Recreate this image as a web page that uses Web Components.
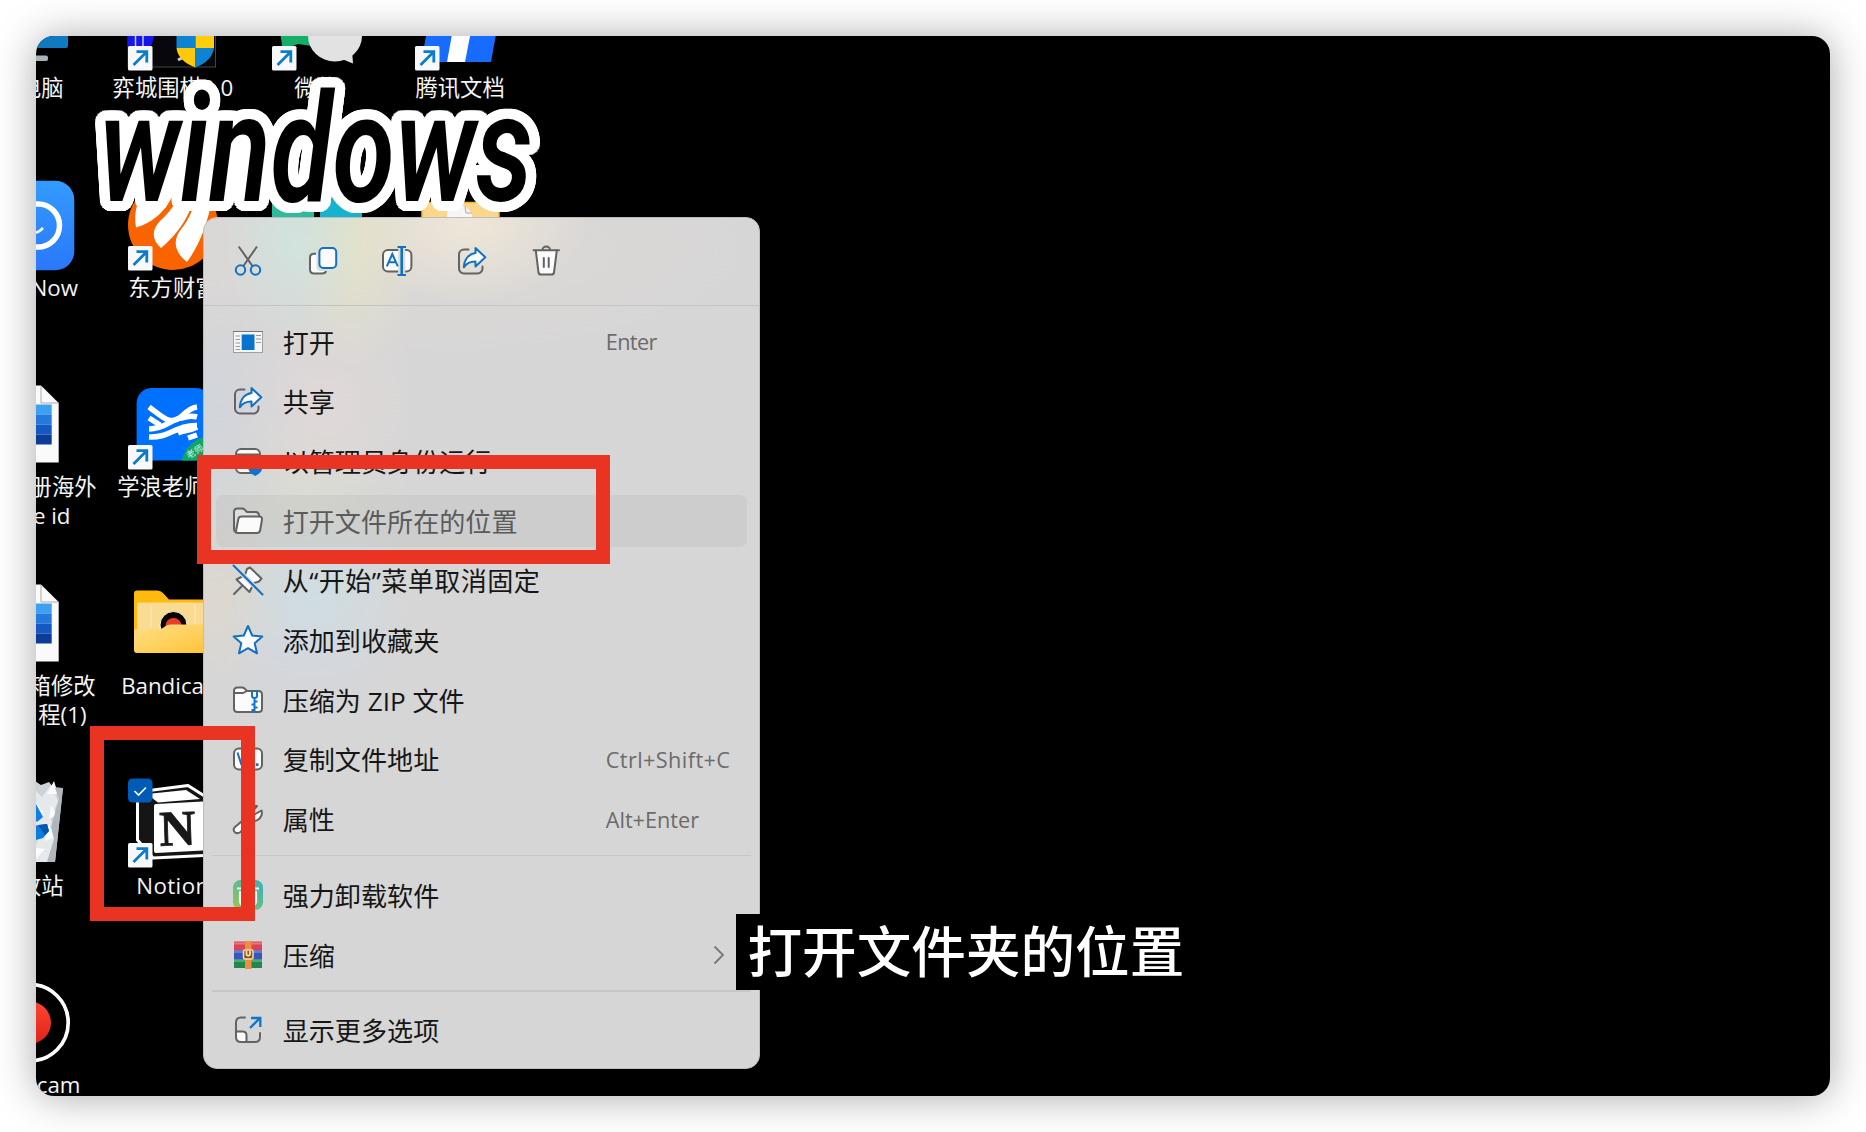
<!DOCTYPE html>
<html lang="zh-CN">
<head>
<meta charset="utf-8">
<title>windows</title>
<style>
html,body{margin:0;height:100%;background:#fff}
body{font-family:"Open Sans","Noto Sans CJK SC",sans-serif;overflow:hidden}
</style>
</head>
<body>
<tutorial-frame></tutorial-frame>
<script>
const B = '#1271c2', G = '#636363', W = '#fbfbfb';
const shareIcon = `<g fill="none" stroke-linejoin="round" stroke-linecap="round"><path d="M12.5 4.5H8A5 5 0 0 0 3 9.500V23.500A5 5 0 0 0 8 28.500H21.500A5 5 0 0 0 26.500 23.500V21.500" stroke="${G}" stroke-width="2"/><path d="M19.500 3L29.300 12.300L19.500 21.500V16.600C14 16.500 10.500 18.500 7.800 22.300C8.300 14.500 12.500 9 19.500 8Z" fill="${W}" stroke="${B}" stroke-width="2"/></g>`;
const ICONS = {
cut:`<g fill="none" stroke-width="2"><path d="M6.700 1.500L20.700 21.300M25 1.500L11.200 21.300" stroke="${G}"/><circle cx="8.500" cy="25" r="4.700" stroke="${B}"/><circle cx="23.500" cy="25" r="4.700" stroke="${B}"/></g>`,
copy:`<path d="M9.500 8.800H7Q3 8.800 3 12.800V24.500Q3 28.500 7 28.500H15Q18.500 28.500 19 26H12.500Q9.500 25 9.500 22Z" fill="${W}"/><path d="M9 8.800H7Q3 8.800 3 12.800V24.500Q3 28.500 7 28.500H15Q18.500 28.500 19 26" fill="none" stroke="${G}" stroke-width="2"/><rect x="12.400" y="3" width="16.800" height="20" rx="4" fill="${W}" stroke="${B}" stroke-width="2"/>`,
rename:`<rect x="2" y="5" width="28.400" height="21.500" rx="5" fill="${W}" stroke="${G}" stroke-width="2"/><path d="M20.700 2V30" stroke="#dcdcd6" stroke-width="7"/><g fill="none" stroke="${B}" stroke-width="2"><path d="M5.800 21.300L11.300 9L16.800 21.300M7.800 17.300H14.800M16.500 2H25M16.500 30H25"/><path d="M20.700 2V30" stroke-width="2.600"/></g>`,
share:shareIcon,
trash:`<g stroke="${G}" stroke-width="2" stroke-linejoin="round" stroke-linecap="round"><path d="M5.800 5.500L8.500 27.500Q8.800 29.500 11 29.500H21.500Q23.700 29.500 24 27.500L26.800 5.500" fill="${W}"/><path d="M3.500 5.300H29M12.500 5A3.700 3.400 0 0 1 20 5M13.800 13V22M18.700 13V22" fill="none"/></g>`,
app:`<rect x="1.500" y="5.500" width="29" height="21" fill="#f5f5f5" stroke="#a0a0a0"/><path d="M1 5.500H31" stroke="#777"/><rect x="9.700" y="8.500" width="12.800" height="15.500" fill="#0873cd"/><path d="M3.500 10H8M3.500 13.500H8M3.500 17H8M3.500 20.500H8M3.500 23.500H8M24 9.500H29M24 13H29M24 16.500H29" stroke="#999"/>`,
admin:`<rect x="4" y="4" width="24" height="24" rx="5" fill="${W}" stroke="${G}" stroke-width="2"/><path d="M4 9.500H28" stroke="${G}" stroke-width="2"/><path d="M16 17Q20 17 23 14.500Q26 17 30.500 17V22Q30 28 23.200 31Q16.500 28 16 22Z" fill="#0a74d2"/>`,
folder:`<g fill="${W}" stroke="${G}" stroke-width="2" stroke-linejoin="round"><path d="M6 28Q2 27.500 2 23.500V7Q2 3.500 5.500 3.500H10Q11.500 3.500 12.500 4.500L15 7H23.500Q27 7 27.300 11.500" fill="#dedede"/><path d="M9.500 11.500H27Q30.500 11.500 29.900 15L28.200 25Q27.700 28 24.700 28H6.500Q3.500 28 4.200 25L6.300 14Q6.800 11.500 9.500 11.500Z"/></g>`,
unpin:`<g stroke-linejoin="round" stroke-linecap="round"><path d="M18 3.500L29.500 14.500L27 17.500L22 19L17.500 28L4.500 15.500L13 11L15 5Z" fill="${W}" stroke="${G}" stroke-width="2"/><path d="M10 22L2 30" stroke="${G}" stroke-width="2"/><path d="M1.500 1.500L30.500 30.500" stroke="#d6d9dc" stroke-width="4.500"/><path d="M1.500 1.500L30.500 30.500" stroke="${B}" stroke-width="2"/></g>`,
star:`<path d="M16 2L20.200 11.500L30.300 12.500L22.700 19.300L25 29.300L16 24.200L7 29.300L9.300 19.300L1.700 12.500L11.800 11.500Z" fill="${W}" stroke="${B}" stroke-width="2" stroke-linejoin="round"/>`,
zip:`<path d="M2 9V24.500Q2 28 5.500 28H26.500Q30 28 30 24.500V11Q30 7 26.500 7H15L12.500 4.500Q11.500 3.500 10 3.500H5.500Q2 3.500 2 7Z" fill="${W}" stroke="${G}" stroke-width="2"/><path d="M2.500 9H11L15 7" fill="none" stroke="${G}" stroke-width="1.800"/><g stroke="#0d76cf" fill="none"><path d="M20 7V12Q20 14 22.500 14Q25 14 25 12V7M22.500 14V28" stroke-width="2"/><path d="M22.500 17.500H25.500M19.500 20.500H22.500M22.500 23.500H25.500M19.500 26H22.500" stroke-width="1.800"/></g>`,
path:`<rect x="2" y="5.500" width="28" height="21" rx="5" fill="${W}" stroke="${G}" stroke-width="2"/><path d="M5.500 9.500L9.500 22" stroke="${B}" stroke-width="2"/><rect x="23.800" y="20.300" width="2.700" height="2.700" fill="${B}"/>`,
wrench:`<path d="M2.500 24.500L14 14.500C13 8 18 2 25 3L20.500 8.500L22.500 11.500L29.500 7.500C31.500 13.500 26 19 18.500 18.500L8.500 29C4 32 0 28 2.500 24.500Z" fill="${W}" stroke="${G}" stroke-width="2" stroke-linejoin="round"/>`,
uninstall:`<defs><linearGradient id="u" x1="1" y1="0" x2="0" y2="1"><stop stop-color="#38b0bd"/><stop offset=".55" stop-color="#67bd87"/><stop offset="1" stop-color="#a2c64e"/></linearGradient></defs><rect x="1" y="1" width="30" height="30" rx="7.500" fill="url(#u)"/><path d="M5 9.500H27M8 12V22Q8 26 12 26H20Q24 26 24 22V12" fill="none" stroke="#f1f8f0" stroke-width="2.200"/>`,
rar:`<rect x="2" y="2.500" width="28" height="9" fill="#d94352"/><rect x="2" y="11.500" width="28" height="9" fill="#3657bd"/><rect x="2" y="20.500" width="28" height="8.500" fill="#22874a"/><path d="M2 4.500H30" stroke="#eb7680" stroke-width="2"/><path d="M2 13H30" stroke="#5c7cdb" stroke-width="2"/><path d="M2 22H30" stroke="#4eaa6d" stroke-width="2"/><rect x="13" y="2" width="6.500" height="28" fill="#ec8e3c"/><rect x="11.500" y="11" width="9.500" height="9" rx="1.500" fill="#8b5624" stroke="#f6dcae" stroke-width="1.500"/><path d="M14.500 12V15.500Q16.200 18 18 15.500V12" fill="none" stroke="#ffe6b8" stroke-width="1.700"/>`,
more:`<g fill="none" stroke-width="2" stroke-linecap="round"><path d="M4 17.500H10.500Q14.500 17.500 14.500 21.500V28H8Q4 28 4 24Z" fill="${W}" stroke="none"/><path d="M13 3.500H9Q4 3.500 4 8.500V23Q4 28 9 28H23Q28 28 28 23V19M4 17.500H10.500Q14.500 17.500 14.500 21.500V28" stroke="${G}"/><path d="M19 4H28.300V13M28 4L18 14" stroke="#0d76cf" stroke-width="2.300" stroke-linecap="butt"/></g>`
};
const arrow = `<rect x="0" y="64" width="24.500" height="24.500" rx="1.500" fill="#f7f8fa"/><path d="M5.500 83L18 70.500M8.500 69.600H18.800V80.500" fill="none" stroke="#0c7bc9" stroke-width="2.800"/>`;
const doc = `<path d="M16 4.500H56L73.700 22V81.500H16Z" fill="#fafafa"/><path d="M56 5V22H73.500" fill="none" stroke="#aaa"/><rect x="16" y="23.500" width="50.700" height="10" fill="#3ea0f0"/><rect x="16" y="33.500" width="50.700" height="10" fill="#2379dc"/><rect x="16" y="43.500" width="50.700" height="10" fill="#1259c3"/><rect x="16" y="53.500" width="50.700" height="10" fill="#0b3c96"/>`;
const ART = {
pc:`<rect x="0" y="10" width="83" height="56" rx="2" fill="#1079c0"/><rect x="25" y="73.500" width="38" height="5.500" rx="2" fill="#a9b2b9"/>`,
go:`<rect x="0" y="8" width="87.500" height="77" fill="#08080c" stroke="#444"/><path d="M0 30H29Q28 54 22 66H0Z" fill="#1616ea"/><path d="M7.500 40V66M15 40V66" stroke="#c6c6ff" stroke-width="1.500"/><path d="M50 78L58 74" stroke="#ccc" stroke-width="3"/><path d="M48.500 40H67.500V66H48.500Z" fill="#0c83d3"/><path d="M67.500 40H86V66H67.500Z" fill="#ffcd0a"/><path d="M48.500 66H67.500V85.500Q50 79 48.500 66Z" fill="#ffc90a"/><path d="M86 66H67.500V85.500Q84 79 86 66Z" fill="#0c83d3"/>${arrow}`,
wechat:`<path d="M8 50H36Q36 58 40 64L26 62L15 66L11 69Z" fill="#13ae67"/><ellipse cx="63" cy="54" rx="27" ry="25.500" fill="#e2e2e2"/><path d="M70 77L81 81.500L80 68Z" fill="#e2e2e2"/>${arrow}`,
docs:`<path d="M13 44H82.500L76 80H6Z" fill="#176bff"/><path d="M38.500 44H57L50 80H32Z" fill="#fff"/>${arrow}`,
now:`<defs><linearGradient id="n" x2="0" y2="1"><stop stop-color="#339bff"/><stop offset="1" stop-color="#2a78fa"/></linearGradient></defs><rect x="0" y="-1.300" width="89.300" height="89.500" rx="19" fill="url(#n)"/><circle cx="53" cy="43.500" r="21.500" fill="none" stroke="#fff" stroke-width="5.500"/><path d="M46 48Q50 54 58 46" fill="none" stroke="#fff" stroke-width="2.500"/>`,
east:`<circle cx="45" cy="43" r="45" fill="#f96400"/><g fill="#fff"><path d="M8 45.500C5 30 10 15 20 5H48C42 24 28 40 8 45.500Z"/><path d="M33 66C24 58 23 48 32 39C42 30 48 22 52 8L66 8C66 30 50 52 33 66Z"/><path d="M59 80C46 70 44 58 54 46C62 36 66 25 69 10L84 15C80 45 68 68 59 80Z"/></g>${arrow}`,
tiles:`<rect x="0" y="0" width="42" height="60" fill="#2dbb9c"/><rect x="48" y="0" width="42" height="60" fill="#15b3cd"/>`,
papers:`<rect x="7" y="20.500" width="77" height="50" rx="3" fill="#fbd68b" stroke="#f1b53c" stroke-width="1.500"/><path d="M32 24H50L57 31V60H32Z" fill="#f6f6f6"/><path d="M50 24L51 31H57" fill="none" stroke="#aaa"/>`,
doc,
wave:`<clipPath id="w"><rect x="8.600" y="7" width="74" height="72.500" rx="15"/></clipPath><rect x="8.600" y="7" width="74" height="72.500" rx="15" fill="#0070ff"/><g fill="none" stroke="#fff" stroke-width="5.500"><path d="M21 26C36 37 42 45 54 35Q62 27 69 26"/><path d="M21 37L32 44M21 48C38 48 44 37 54 37Q62 34 69 36M21 56C42 57 48 44 69 44.500M50 52C57 49 61 50 69 46M60 57L69 54"/></g><g clip-path="url(#w)"><circle cx="84" cy="86" r="31" fill="#12a665"/><text x="60" y="77" transform="rotate(-32 62 76)" font-size="9" fill="#d8f3e5" font-family="Noto Sans CJK SC">老师</text></g>${arrow}`,
folder:`<defs><linearGradient id="f" x2="1" y2="1"><stop stop-color="#ffdf88"/><stop offset="1" stop-color="#ffc335"/></linearGradient></defs><path d="M9 10.500H29Q33 10.500 35 13L41 19.500H82V60H6V13.500Q6 10.500 9 10.500Z" fill="#ffb90f"/><rect x="9" y="22.500" width="74" height="35" fill="#fadb93"/><path d="M23 24V48M67 24V48" stroke="#ffe9b7"/><circle cx="45.500" cy="45" r="13.500" fill="#090706" stroke="#fff2cf"/><circle cx="45.500" cy="46" r="8" fill="#ec3b28"/><path d="M6 51Q6 49 9 49H31Q34 49 37 46.500Q39 44.500 43 44.500H84V73H9Q6 73 6 70Z" fill="url(#f)"/>`,
bin:`<path d="M8 5L25 9L45 5L50 2L56 6L64 3L68 8L78 9L70 83H20Z" fill="#cdd2d6"/><path d="M44 5L57 18L66 6L73 22L66 40L71 55L63 83H40L53 61L45 40Z" fill="#e6e9eb"/><path d="M62 15L69 2L73 15ZM45 16L58 33L49 43ZM63 45L71 58L60 62ZM46 68L60 70L50 81ZM66 26L72 36L64 40Z" fill="#fafbfb"/><path d="M78 9L70 83H62L69 60L66 48L74 20L70 9Z" fill="#b0b6bb"/><path d="M45 28L51 25L58 38L52 43L46 36Z" fill="#0a80e0"/><path d="M47 47L62 45L64 52L58 59L51 61V64L45 57Z" fill="#0a7cdd"/><path d="M53 46L62 45L64 52L60 56Z" fill="#0757ae"/>`,
notion:`<path d="M9.500 13L60 6.500L86 23V76L25 79L9.500 61Z" fill="#151515" stroke="#fff" stroke-width="3" stroke-linejoin="round"/><path d="M19 15L58 11L72 20L30 23.500Z" fill="#fff"/><path d="M26 27Q26 25 28 25L84 22V71L28 74Q26 74 26 72Z" fill="#fff"/><text x="31.500" y="66" font-family="Liberation Serif" font-weight="700" font-size="50" fill="#181818" stroke="#181818" stroke-width=".8" transform="rotate(-2 50 50)">N</text>${arrow}<rect x="0" y="-.5" width="24.500" height="24" rx="4.500" fill="#005bb7"/><path d="M6.500 12L10.500 16L18 8.500" fill="none" stroke="#fff" stroke-width="1.600"/>`,
rec:`<defs><linearGradient id="r" x2="0" y2="1"><stop stop-color="#ff4530"/><stop offset="1" stop-color="#dc2418"/></linearGradient></defs><circle cx="45" cy="43.700" r="38.200" fill="none" stroke="#fff" stroke-width="3.700"/><circle cx="45" cy="43.700" r="21" fill="url(#r)"/>`
};
function make(name, tpl, after){
  customElements.define(name, class extends HTMLElement{
    connectedCallback(){
      if(this.shadowRoot) return;
      this.attachShadow({mode:'open'}).innerHTML = typeof tpl === 'function' ? tpl(this) : tpl;
      if(after) after(this);
    }
  });
}
make('line-icon', e=>`<style>:host{display:block;width:32px;height:32px;flex:none}svg{display:block;width:32px;height:32px}</style><svg viewBox="0 0 32 32">${ICONS[e.getAttribute('name')]}</svg>`);

make('desktop-icon', e=>`<style>
:host{position:absolute;left:calc(var(--cx)*1px - 108.500px);top:calc(var(--cy)*1px - 143.500px);width:144px;display:flex;flex-direction:column;align-items:center;gap:4.500px;color:#f4f4f4;font-size:22.3px;line-height:28.5px}
svg{display:block;width:90px;height:88px;overflow:visible}
.label{text-align:center;white-space:pre}
:host([clipped]) .label{align-self:stretch;display:flex;flex-direction:column;align-items:flex-end;padding-right:var(--inset)}
</style><svg viewBox="0 0 90 88">${ART[e.getAttribute('art')]}</svg><div class="label"><slot></slot></div>`,
 e=>{e.style.setProperty('--cx',e.getAttribute('cx'));e.style.setProperty('--cy',e.getAttribute('cy'));});

make('menu-item', e=>`<style>
:host{display:flex;align-items:center;height:59.7px;padding:0 12px}
.row{flex:1;height:52px;display:flex;align-items:center;border-radius:7px;padding-left:15.700px;color:#161616;font-size:26.100px;white-space:nowrap}
:host([active]) .row{background:rgba(0,0,0,.04);color:#5b5b5b}
.label{margin-left:19px;width:323px;font-weight:370}
::slotted(b){font-weight:400}
.key{font-size:21.700px;color:#6b6b6b;letter-spacing:var(--track,0)}
svg{margin-left:106.500px;width:14px;height:22px}
</style><div class="row"><line-icon name="${e.getAttribute('icon')}"></line-icon><span class="label"><slot></slot></span>${e.hasAttribute('key')?`<span class="key">${e.getAttribute('key')}</span>`:''}${e.hasAttribute('submenu')?`<svg viewBox="0 0 14 22"><path d="M2.500 2.500L11 11L2.500 19.500" fill="none" stroke="#777" stroke-width="1.800"/></svg>`:''}</div>`);

make('menu-separator',`<style>:host{display:block;height:16.200px;padding:6px 8px 0;box-sizing:border-box}div{height:1.500px;background:#c7c7c7}</style><div></div>`);

make('menu-toolbar',`<style>:host{display:flex;align-items:center;height:87.500px;padding-left:6.700px;border-bottom:1.500px solid #c4c4c2;box-sizing:border-box}::slotted(*){margin:0 21.300px}</style><slot></slot>`);

make('context-menu',`<style>
:host{position:absolute;left:167px;top:181px;width:556.500px;height:851.500px;box-sizing:border-box;border-radius:14px;overflow:hidden;border:1px solid #bdbdbd;
background:
radial-gradient(ellipse 70px 100px at 90px 25px,rgba(205,230,224,.75),transparent),
radial-gradient(ellipse 65px 120px at 150px 30px,rgba(230,230,196,.7),transparent),
radial-gradient(ellipse 120px 80px at 265px 5px,rgba(242,233,216,.85),transparent),
radial-gradient(ellipse 400px 120px at 180px 30px,rgba(223,218,214,.8),transparent),
radial-gradient(ellipse 100px 100px at 120px 185px,rgba(229,217,217,.7),transparent),
radial-gradient(ellipse 90px 130px at 15px 190px,rgba(208,212,220,.8),transparent),
radial-gradient(ellipse 110px 80px at 100px 270px,rgba(218,221,209,.75),transparent),
radial-gradient(ellipse 70px 90px at 10px 385px,rgba(224,216,203,.7),transparent),
radial-gradient(ellipse 100px 90px at 110px 375px,rgba(206,223,228,.8),transparent),
radial-gradient(ellipse 110px 80px at 100px 430px,rgba(211,214,225,.7),transparent),
#d6d6d6}
.list{display:flex;flex-direction:column;padding-top:6.200px}
</style>
<menu-toolbar><line-icon name="cut"></line-icon><line-icon name="copy"></line-icon><line-icon name="rename"></line-icon><line-icon name="share"></line-icon><line-icon name="trash"></line-icon></menu-toolbar>
<div class="list">
<menu-item icon="app" key="Enter" style="--track:-.6px">打开</menu-item>
<menu-item icon="share">共享</menu-item>
<menu-item icon="admin">以管理员身份运行</menu-item>
<menu-item icon="folder" active>打开文件所在的位置</menu-item>
<menu-item icon="unpin" style="letter-spacing:.4px">从“开始”菜单取消固定</menu-item>
<menu-item icon="star">添加到收藏夹</menu-item>
<menu-item icon="zip">压缩为 <b>ZIP</b> 文件</menu-item>
<menu-item icon="path" key="Ctrl+Shift+C" style="--track:.4px">复制文件地址</menu-item>
<menu-item icon="wrench" key="Alt+Enter">属性</menu-item>
<menu-separator></menu-separator>
<menu-item icon="uninstall">强力卸载软件</menu-item>
<menu-item icon="rar" submenu>压缩</menu-item>
<menu-separator></menu-separator>
<menu-item icon="more">显示更多选项</menu-item>
</div>`);

make('highlight-box',`<style>:host{position:absolute;box-sizing:border-box;border:14px solid #e93323}</style>`);

make('outlined-title',`<style>
:host{position:absolute;left:62.500px;top:28.500px}
span{display:block;font:italic 580 151px/170px Roboto,sans-serif;color:#000;white-space:nowrap;transform-origin:0 0;width:max-content}
</style><span><slot></slot></span>`, e=>{
  const span = e.shadowRoot.querySelector('span');
  const scale = 434 / span.offsetWidth;
  const ring = [];
  for(const r of [4,7,10.3]) for(let i=0;i<36;i++){
    const a = i*Math.PI/18;
    ring.push(`${(r*Math.cos(a)/scale).toFixed(2)}px ${(r*Math.sin(a)).toFixed(2)}px 0 #fff`);
  }
  span.style.textShadow = ring.join(',');
  span.style.transform = `scaleX(${scale})`;
});

make('caption-bar',`<style>:host{position:absolute;left:700px;top:877.700px;height:76px;box-sizing:border-box;padding:0 11.500px;background:#000;color:#fff;font:500 54.600px/70.500px "Noto Sans CJK SC",sans-serif;white-space:nowrap}</style><slot></slot>`);

make('tutorial-frame',`<style>
:host{display:flex;box-sizing:border-box;width:1866px;height:1132px;padding:36px;background:#fff}
main{position:relative;flex:1;background:#000;border-radius:18px;overflow:hidden}
.shade{display:flex;flex:1;border-radius:18px;box-shadow:0 1px 40px rgba(0,0,0,.34)}
</style>
<div class="shade"><main>
<desktop-icon art="pc" cx="30" cy="89" clipped style="--inset:38px">电脑</desktop-icon>
<desktop-icon art="go" cx="173.400" cy="89">弈城围棋2.0</desktop-icon>
<desktop-icon art="wechat" cx="317" cy="89">微信</desktop-icon>
<desktop-icon art="docs" cx="460.600" cy="89">腾讯文档</desktop-icon>
<desktop-icon art="now" cx="30" cy="289" clipped style="--inset:23.500px">Now</desktop-icon>
<desktop-icon art="east" cx="173.400" cy="289">东方财富</desktop-icon>
<desktop-icon art="tiles" cx="317" cy="289"></desktop-icon>
<desktop-icon art="papers" cx="460.600" cy="289"></desktop-icon>
<desktop-icon art="doc" cx="30" cy="488.200" clipped style="--inset:5px"><div>册海外</div><div style="margin-right:26px">e id</div></desktop-icon>
<desktop-icon art="wave" cx="173.400" cy="488.200">学浪老师端</desktop-icon>
<desktop-icon art="doc" cx="30" cy="687.300" clipped style="--inset:6px"><div>箱修改</div><div style="margin-right:9px">程(1)</div></desktop-icon>
<desktop-icon art="folder" cx="173.400" cy="687.300">Bandicam</desktop-icon>
<desktop-icon art="bin" cx="30" cy="886.500" clipped style="--inset:38px">收站</desktop-icon>
<desktop-icon art="notion" cx="173.400" cy="886.500" style="letter-spacing:.4px">Notion</desktop-icon>
<desktop-icon art="rec" cx="30" cy="1086" clipped style="--inset:21px">icam</desktop-icon>
<outlined-title>windows</outlined-title>
<context-menu></context-menu>
<highlight-box style="left:161px;top:419px;width:413px;height:108.500px"></highlight-box>
<highlight-box style="left:54px;top:690px;width:165px;height:195px"></highlight-box>
<caption-bar>打开文件夹的位置</caption-bar>
</main></div>`);
</script>
</body>
</html>
